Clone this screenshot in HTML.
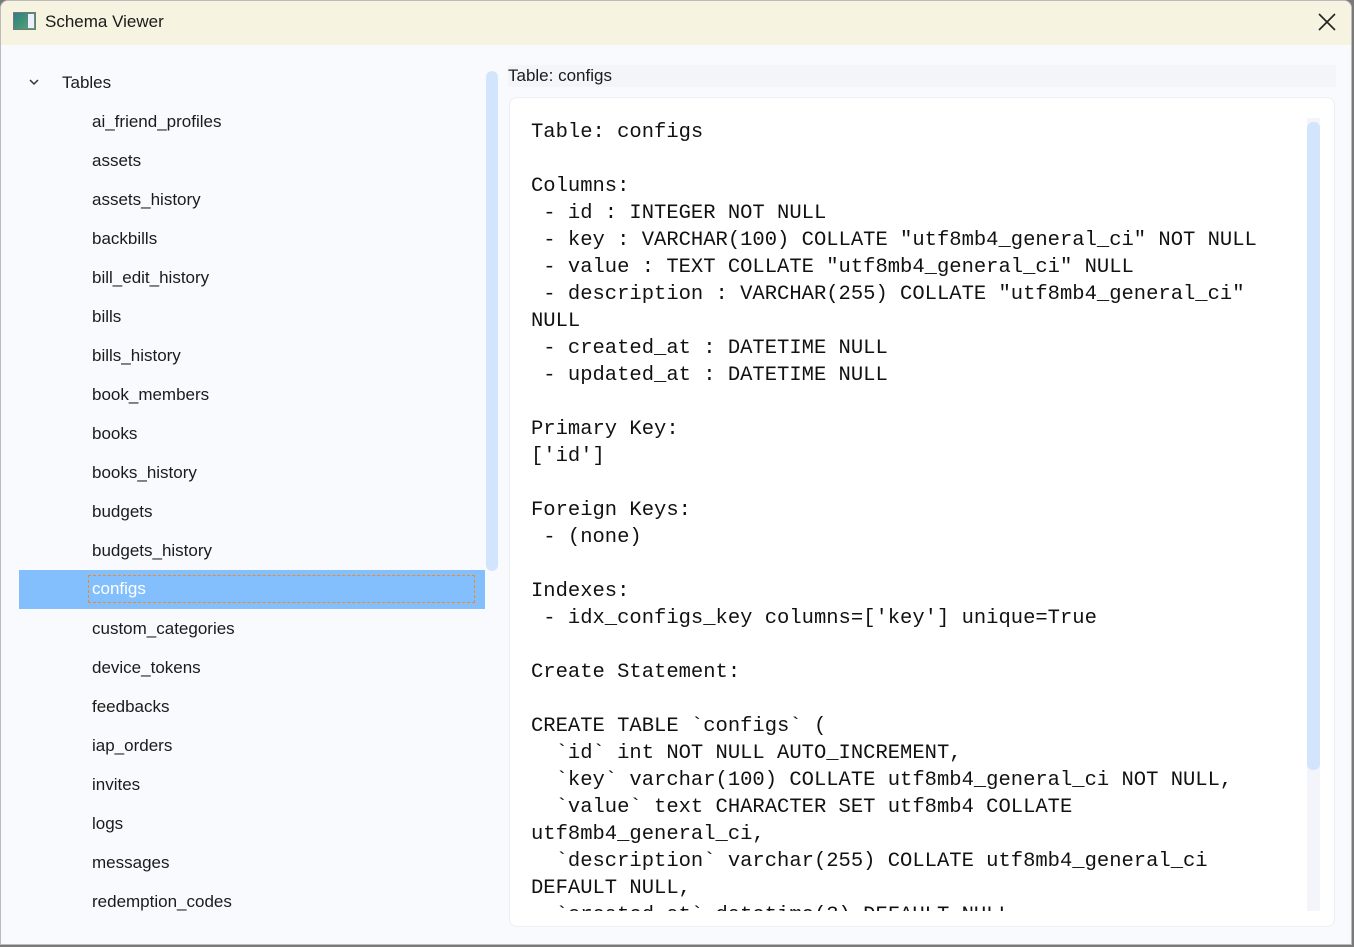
<!DOCTYPE html>
<html><head><meta charset="utf-8"><style>
*{margin:0;padding:0;box-sizing:border-box}
body{width:1354px;height:947px;overflow:hidden;background:#7a7a7a;position:relative;font-family:"Liberation Sans",sans-serif}
.win{position:absolute;left:0;top:0;width:1352px;height:945px;background:#f9fafd;border:1px solid #bcbcbc;border-radius:8px 8px 0 0;overflow:hidden}
.title{position:absolute;left:-1px;top:-1px;right:-1px;height:45px;background:#f7f3e1}
.title .t{position:absolute;left:45px;top:12px;font-size:17px;color:#1a1a1a}
.ic{position:absolute;left:13px;top:12px;width:23px;height:18px;border:1px solid #777;background:linear-gradient(135deg,#2d7f86,#5aa86a)}
.ic:after{content:"";position:absolute;right:1px;top:1px;width:6px;height:14px;background:#eef}
.x{position:absolute;left:1317px;top:12px}
.tree{position:absolute;left:-1px;top:62px;width:485px}
.row{height:39px;line-height:39px;font-size:17px;color:#1b1b1b;padding-left:92px;position:relative}
.row.h{padding-left:62px}
.row.sel{background:#84bffd;color:#fff;margin-left:19px;padding-left:0}
.row.sel span{position:absolute;left:69px;top:5px;right:10px;height:28px;border:1px dashed #f08a1c;line-height:26px;padding-left:3px}
.chev{position:absolute;left:28px;top:15px}
.lsb{position:absolute;left:485px;top:70px;width:12px;height:500px;background:#d3e5fd;border-radius:6px}
.hdr{position:absolute;left:507px;top:64px;width:828px;height:22px;background:#f4f5f9;font-size:17px;color:#1b1b1b;padding-top:1px}
.panel{position:absolute;left:508px;top:96px;width:826px;height:830px;background:#fff;border:1px solid #eceef3;border-radius:8px;overflow:hidden}
pre{position:absolute;left:21px;top:21px;font-family:"Liberation Mono",monospace;font-size:20.5px;line-height:27px;color:#111;height:792px;overflow:hidden}
.rtrack{position:absolute;left:797px;top:20px;width:13px;height:793px;background:#f3f5fa}
.rthumb{position:absolute;left:797px;top:24px;width:13px;height:648px;background:#d3e5fd;border-radius:6px}
</style></head><body>
<div class="win">
<div class="title"><div class="ic"></div><div class="t">Schema Viewer</div>
<svg class="x" width="20" height="20" viewBox="0 0 20 20"><path d="M2 2L18 18M18 2L2 18" stroke="#222" stroke-width="1.6"/></svg></div>
<div class="tree">
<div class="row h"><svg class="chev" width="12" height="8" viewBox="0 0 12 8"><path d="M2 2L6 6L10 2" fill="none" stroke="#333" stroke-width="1.5"/></svg>Tables</div>
<div class="row">ai_friend_profiles</div>
<div class="row">assets</div>
<div class="row">assets_history</div>
<div class="row">backbills</div>
<div class="row">bill_edit_history</div>
<div class="row">bills</div>
<div class="row">bills_history</div>
<div class="row">book_members</div>
<div class="row">books</div>
<div class="row">books_history</div>
<div class="row">budgets</div>
<div class="row">budgets_history</div>
<div class="row sel"><span>configs</span></div>
<div class="row">custom_categories</div>
<div class="row">device_tokens</div>
<div class="row">feedbacks</div>
<div class="row">iap_orders</div>
<div class="row">invites</div>
<div class="row">logs</div>
<div class="row">messages</div>
<div class="row">redemption_codes</div>
</div>
<div class="lsb"></div>
<div class="hdr">Table: configs</div>
<div class="panel">
<pre>Table: configs

Columns:
 - id : INTEGER NOT NULL
 - key : VARCHAR(100) COLLATE "utf8mb4_general_ci" NOT NULL
 - value : TEXT COLLATE "utf8mb4_general_ci" NULL
 - description : VARCHAR(255) COLLATE "utf8mb4_general_ci"
NULL
 - created_at : DATETIME NULL
 - updated_at : DATETIME NULL

Primary Key:
['id']

Foreign Keys:
 - (none)

Indexes:
 - idx_configs_key columns=['key'] unique=True

Create Statement:

CREATE TABLE `configs` (
  `id` int NOT NULL AUTO_INCREMENT,
  `key` varchar(100) COLLATE utf8mb4_general_ci NOT NULL,
  `value` text CHARACTER SET utf8mb4 COLLATE
utf8mb4_general_ci,
  `description` varchar(255) COLLATE utf8mb4_general_ci
DEFAULT NULL,
  `created_at` datetime(3) DEFAULT NULL,</pre>
<div class="rtrack"></div><div class="rthumb"></div>
</div>
</div>
</body></html>
